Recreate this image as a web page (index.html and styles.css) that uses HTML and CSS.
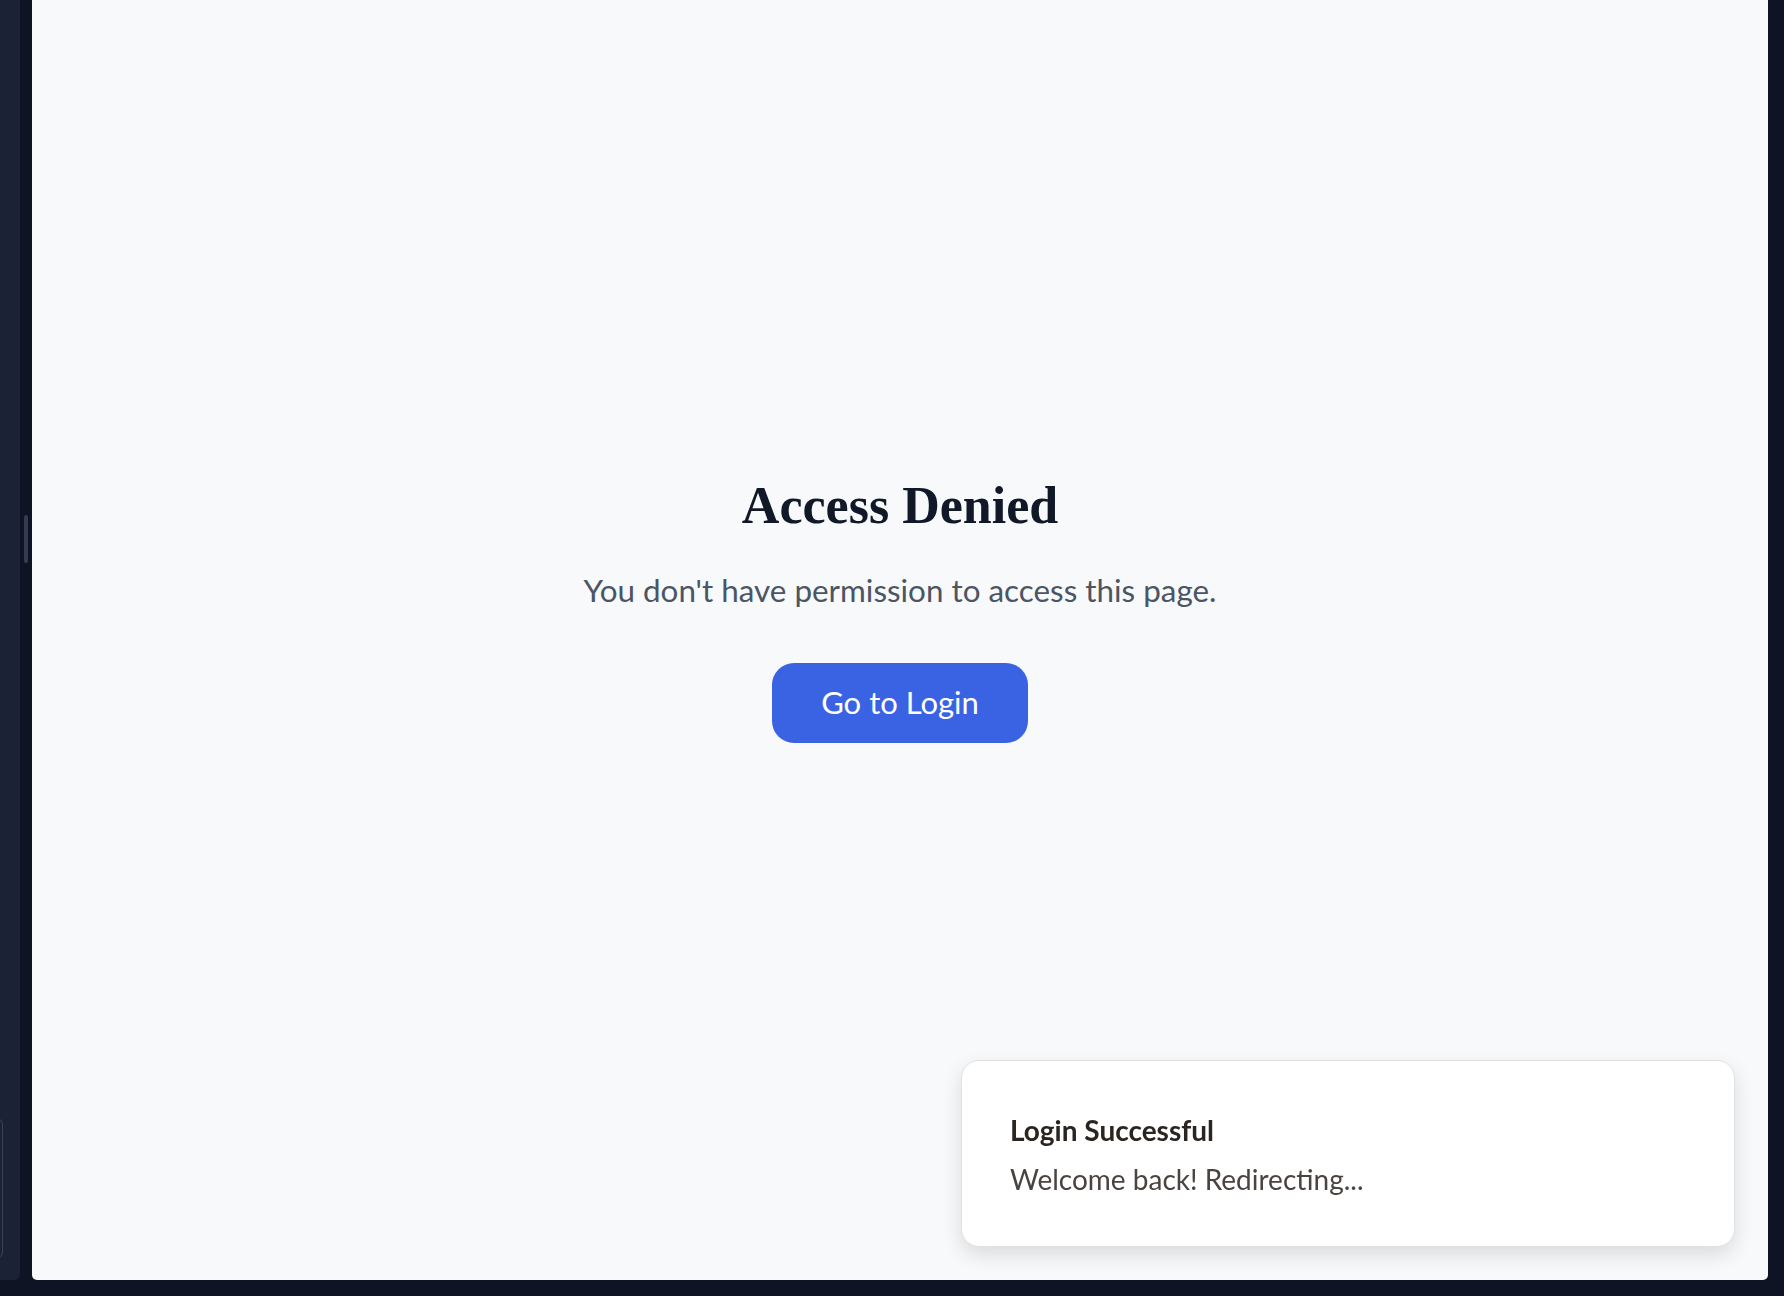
FILE: index.html
```html
<!DOCTYPE html>
<html lang="en">
<head>
<meta charset="utf-8">
<title>Access Denied</title>
<link rel="stylesheet" href="styles.css">
</head>
<body>
<div class="shell">
  <aside class="sidebar">
    <div class="sidebar-card"></div>
  </aside>
  <div class="gutter">
    <div class="handle"></div>
  </div>
  <main class="main">
    <section class="denied">
      <h1 class="denied-title">Access Denied</h1>
      <p class="denied-text">You don't have permission to access this page.</p>
      <button class="login-btn" type="button">Go to Login</button>
    </section>
  </main>
  <div class="edge"></div>
</div>
<div class="toast">
  <div class="toast-title">Login Successful</div>
  <div class="toast-desc">Welcome back! Redirecting...</div>
</div>
</body>
</html>
```

FILE: styles.css
```css
* { box-sizing: border-box; }
html, body { margin: 0; padding: 0; }
body {
  background: #0f1424;
  width: 1784px;
  height: 1296px;
  overflow: hidden;
  font-family: Lato, "Noto Sans", sans-serif;
}
.shell {
  display: flex;
  height: 1280px;
}
.sidebar {
  width: 20px;
  background: #1c2235;
  border-bottom-right-radius: 6px;
  display: flex;
  flex-direction: column;
  overflow: hidden;
}
.sidebar-card {
  margin-top: auto;
  margin-bottom: 20px;
  margin-left: -197px;
  width: 200px;
  height: 143px;
  border: 1px solid #3a4059;
  border-radius: 8px;
  flex-shrink: 0;
}
.gutter {
  width: 12px;
  padding-top: 515px;
}
.handle {
  margin-left: 4px;
  width: 4px;
  height: 48px;
  border-radius: 2px;
  background: #353b51;
}
.main {
  flex: 1;
  background: #f8f9fb;
  border-bottom-left-radius: 5px;
  border-bottom-right-radius: 5px;
  display: flex;
  flex-direction: column;
  align-items: center;
  justify-content: center;
  padding-bottom: 64px;
}
.edge { width: 16px; }
.denied {
  display: flex;
  flex-direction: column;
  align-items: center;
}
.denied-title {
  margin: 0;
  font-family: "Liberation Serif", "DejaVu Serif", serif;
  font-weight: 700;
  font-size: 52px;
  line-height: 64px;
  color: #111827;
}
.denied-text {
  margin: 30px 0 0;
  font-size: 31.4px;
  line-height: 44px;
  color: #4b5563;
}
.login-btn {
  margin-top: 51px;
  font-family: Lato, "Noto Sans", sans-serif;
  font-size: 31px;
  line-height: 36px;
  padding: 21px 49px 23px;
  border: none;
  border-radius: 22px;
  background: #3a63e4;
  color: #ffffff;
}
.toast {
  position: fixed;
  right: 49px;
  bottom: 49px;
  width: 774px;
  height: 187px;
  background: #ffffff;
  border: 1px solid #e0e0e0;
  border-radius: 18px;
  box-shadow: 0 8px 20px rgba(0, 0, 0, 0.12);
  padding: 51px 48px 48px;
}
.toast-title {
  font-size: 28px;
  line-height: 36px;
  font-weight: 700;
  color: #2b2522;
}
.toast-desc {
  margin-top: 13px;
  font-size: 28px;
  line-height: 36px;
  color: #4a4340;
}
```
